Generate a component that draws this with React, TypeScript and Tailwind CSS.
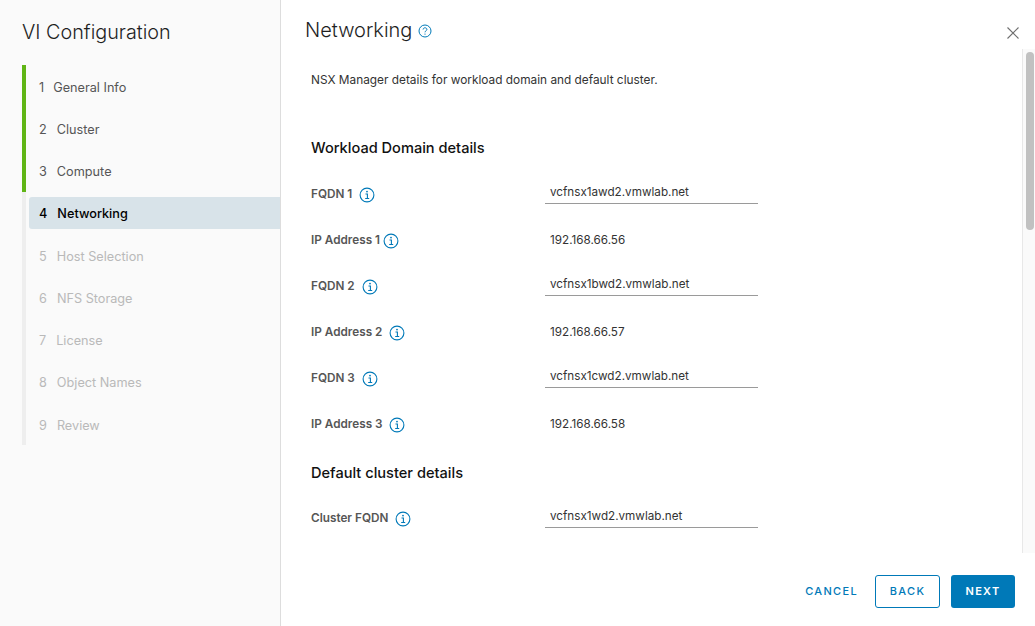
import React from 'react';

const steps = [
  { n: 1, label: 'General Info', gap: 'gap-[9px]', state: 'done' },
  { n: 2, label: 'Cluster', gap: 'gap-[10px]', state: 'done' },
  { n: 3, label: 'Compute', gap: 'gap-[10px]', state: 'done' },
  { n: 4, label: 'Networking', gap: 'gap-[10px]', state: 'active' },
  { n: 5, label: 'Host Selection', gap: 'gap-[10px]', state: 'todo' },
  { n: 6, label: 'NFS Storage', gap: 'gap-[10px]', state: 'todo' },
  { n: 7, label: 'License', gap: 'gap-[10px]', state: 'todo' },
  { n: 8, label: 'Object Names', gap: 'gap-[10px]', state: 'todo' },
  { n: 9, label: 'Review', gap: 'gap-[10px]', state: 'todo' },
];

const InfoIcon: React.FC = () => (
  <svg width="16" height="16" viewBox="0 0 16 16" fill="none" className="shrink-0">
    <circle cx="8" cy="8" r="6.9" stroke="#0079b8" strokeWidth="1.1" />
    <circle cx="8" cy="4.6" r="0.9" fill="#0079b8" />
    <path d="M6.5 7h1.9v4.4M6.2 11.5h4" stroke="#0079b8" strokeWidth="1.1" />
  </svg>
);

const HelpIcon: React.FC = () => (
  <svg width="14" height="14" viewBox="0 0 14 14" fill="none" className="mt-[2px] shrink-0">
    <circle cx="7" cy="7" r="6" stroke="#0079b8" strokeWidth="1" />
    <path d="M5.1 5.5c0-1 .8-1.7 1.9-1.7s1.9.7 1.9 1.6c0 1.4-1.9 1.4-1.9 2.9" stroke="#0079b8" strokeWidth="1" />
    <circle cx="7" cy="10.1" r="0.65" fill="#0079b8" />
  </svg>
);

const FieldRow: React.FC<{ label: string; value: string; input?: boolean; gap: string }> = ({
  label,
  value,
  input,
  gap,
}) => (
  <div className="flex h-[46px] items-center">
    <div className={`flex w-[234px] items-center ${gap} text-[11.75px] font-semibold text-[#565656]`}>
      <span>{label}</span>
      <InfoIcon />
    </div>
    {input ? (
      <div className="mt-[-4px] h-[22px] w-[213px] border-b border-[#9a9a9a] pl-[5px] text-[11.7px] leading-[20px] text-[#333333]">
        {value}
      </div>
    ) : (
      <div className="mt-[-3px] pl-[5px] text-[11.7px] leading-[22px] text-[#333333]">{value}</div>
    )}
  </div>
);

const App: React.FC = () => (
  <div className="flex h-[626px] w-[1035px] overflow-hidden bg-white font-['Inter','Liberation_Sans',sans-serif]">
    {/* Wizard steps */}
    <aside className="h-full w-[281px] shrink-0 border-r border-[#dddddd] bg-[#fafafa] pl-[22px]">
      <h1 className="pt-[18px] text-[19.8px] font-light leading-[28px] text-[#1f1f1f]">VI Configuration</h1>
      <ol className="mt-[19px]">
        {steps.map((s) => (
          <li
            key={s.n}
            className={`flex h-[42.25px] items-center border-l-[4px] pl-[3px] ${
              s.state === 'done' ? 'border-[#60b515]' : 'border-[#eeeeee]'
            }`}
          >
            <div
              className={`flex h-[32px] w-full items-center ${s.gap} pl-[10px] pt-[2px] text-[12.7px] ${
                s.state === 'active'
                  ? 'rounded-l-[3px] bg-[#d8e3e9] font-medium text-[#000000]'
                  : s.state === 'done'
                    ? 'text-[#565656]'
                    : 'text-[#b9b9b9]'
              }`}
            >
              <span>{s.n}</span>
              <span>{s.label}</span>
            </div>
          </li>
        ))}
      </ol>
    </aside>

    {/* Main panel */}
    <main className="flex min-w-0 flex-1 flex-col">
      <header className="flex h-[49px] shrink-0 items-start justify-between pl-[24px] pr-[15px] pt-[16px]">
        <div className="flex items-center gap-[6px]">
          <h2 className="text-[20px] font-light leading-[28px] text-[#1f1f1f]">Networking</h2>
          <HelpIcon />
        </div>
        <svg width="14" height="14" viewBox="0 0 14 14" fill="none" className="mt-[10px]">
          <path d="M1.5 1.5l11 11M12.5 1.5l-11 11" stroke="#6f6f6f" strokeWidth="1.1" />
        </svg>
      </header>

      <div className="flex h-[504px] shrink-0">
        <div className="min-w-0 flex-1 overflow-hidden pl-[30px]">
          <p className="pt-[21px] text-[11.85px] leading-[20px] text-[#333333]">
            NSX Manager details for workload domain and default cluster.
          </p>
          <h3 className="mt-[48px] text-[14.6px] font-medium leading-[20px] text-[#111111]">Workload Domain details</h3>
          <div className="mt-[14px]">
            <FieldRow label="FQDN 1" value="vcfnsx1awd2.vmwlab.net" input gap="gap-[7px]" />
            <FieldRow label="IP Address 1" value="192.168.66.56" gap="gap-[3px]" />
            <FieldRow label="FQDN 2" value="vcfnsx1bwd2.vmwlab.net" input gap="gap-[7px]" />
            <FieldRow label="IP Address 2" value="192.168.66.57" gap="gap-[7px]" />
            <FieldRow label="FQDN 3" value="vcfnsx1cwd2.vmwlab.net" input gap="gap-[7px]" />
            <FieldRow label="IP Address 3" value="192.168.66.58" gap="gap-[6px]" />
          </div>
          <h3 className="mt-[15px] text-[14.6px] font-medium leading-[20px] text-[#111111]">Default cluster details</h3>
          <div className="mt-[13px]">
            <FieldRow label="Cluster FQDN" value="vcfnsx1wd2.vmwlab.net" input gap="gap-[7px]" />
          </div>
        </div>
        {/* Scrollbar */}
        <div className="w-[13px] shrink-0 border-l border-[#e8e8e8] bg-[#fafafa] pl-[3px] pt-[3px]">
          <div className="h-[178px] w-[8px] rounded-full bg-[#c1c1c1]" />
        </div>
      </div>

      <footer className="flex flex-1 items-start justify-end gap-[11px] pr-[20px] pt-[22px] text-[11px] font-medium tracking-[0.12em]">
        <button className="h-[33px] pr-[6px] text-[#0079b8]">CANCEL</button>
        <button className="h-[33px] w-[65px] rounded-[3px] border border-[#0079b8] text-[#0079b8]">BACK</button>
        <button className="h-[33px] w-[64px] rounded-[3px] bg-[#0079b8] font-semibold text-white">NEXT</button>
      </footer>
    </main>
  </div>
);

export default App;
